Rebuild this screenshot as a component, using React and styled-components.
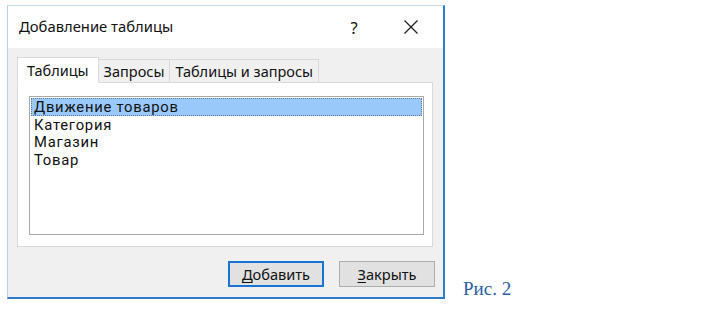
import React from "react";
import styled, { createGlobalStyle } from "styled-components";

const Global = createGlobalStyle`
  html, body { margin: 0; padding: 0; background: #ffffff; }
  body { width: 727px; height: 309px; overflow: hidden; }
`;

const Page = styled.div`
  display: flex;
  align-items: flex-end;
  padding: 5px 0 0 7px;
  gap: 18px;
`;

const Dialog = styled.div`
  width: 435px;
  height: 291px;
  border-top: 1px solid #c9d9ea;
  border-left: 1px solid #b7cfe9;
  border-right: 2px solid #2b7bd3;
  border-bottom: 2px solid #2b7bd3;
  background: #f0f0f0;
  display: flex;
  flex-direction: column;
  font-family: "Noto Sans", "Open Sans", sans-serif;
  color: #111111;
`;

const TitleBar = styled.div`
  height: 42px;
  background: #ffffff;
  display: flex;
  align-items: center;
  padding-left: 11px;
  padding-right: 2px;
  font-size: 14.8px;
`;

const Title = styled.div`
  flex: 1;
  margin-top: -2px;
`;

const TitleButton = styled.div`
  width: ${(p) => p.$w}px;
  display: flex;
  justify-content: center;
  align-items: center;
  font-size: 16.5px;
`;

const Body = styled.div`
  flex: 1;
  display: flex;
  flex-direction: column;
  padding: 8px 10px 0 9px;
`;

const Tabs = styled.div`
  display: flex;
  align-items: flex-end;
  height: 26px;
  position: relative;
  z-index: 1;
`;

const Tab = styled.div`
  height: ${(p) => (p.$active ? "26px" : "23px")};
  padding: 0 ${(p) => (p.$active ? "9px" : "5px")};
  background: ${(p) => (p.$active ? "#ffffff" : "#f0f0f0")};
  border: 1px solid #d9d9d9;
  border-bottom: ${(p) => (p.$active ? "1px solid #ffffff" : "none")};
  margin-right: -1px;
  box-sizing: border-box;
  display: flex;
  align-items: center;
  font-size: 14.5px;
  margin-bottom: ${(p) => (p.$active ? "-1px" : "0")};
`;

const Panel = styled.div`
  height: 165px;
  box-sizing: border-box;
  background: #ffffff;
  border: 1px solid #d9d9d9;
  padding: 13px 8px 0 11px;
`;

const ListBox = styled.div`
  height: 139px;
  box-sizing: border-box;
  border: 1px solid #a9a9a9;
  padding: 1px;
`;

const Item = styled.div`
  height: 17.5px;
  line-height: 18px;
  padding-left: 3px;
  font-family: Roboto, "Noto Sans", sans-serif;
  font-size: 14.8px;
  letter-spacing: 0.75px;
  color: #111111;
  background: ${(p) => (p.$selected ? "#99c9fb" : "transparent")};
  outline: ${(p) => (p.$selected ? "1px dotted #5a7ea8" : "none")};
  outline-offset: -1px;
`;

const Footer = styled.div`
  display: flex;
  justify-content: flex-end;
  gap: 15px;
  margin-right: -2px;
  padding: 14px 0 0 0;
`;

const Button = styled.div`
  width: 96px;
  height: 26px;
  box-sizing: border-box;
  background: #e1e1e1;
  border: ${(p) => (p.$default ? "2px solid #1a73d3" : "1px solid #adadad")};
  display: flex;
  align-items: center;
  justify-content: center;
  font-size: 14.6px;
  color: #111111;
  & u { text-decoration: underline; text-underline-offset: 2px; }
`;

const Caption = styled.div`
  font-family: "Liberation Serif", "Times New Roman", serif;
  font-size: 19px;
  color: #2c5fa6;
  line-height: 20px;
`;

export default function App() {
  const items = ["Движение товаров", "Категория", "Магазин", "Товар"];
  return (
    <>
      <Global />
      <Page>
        <Dialog>
          <TitleBar>
            <Title>Добавление таблицы</Title>
            <TitleButton $w={54}>?</TitleButton>
            <TitleButton $w={60}>
              <svg width="16" height="16" viewBox="0 0 16 16">
                <path d="M1.5 1.5 L14.5 14.5 M14.5 1.5 L1.5 14.5" stroke="#222" strokeWidth="1.3" fill="none" />
              </svg>
            </TitleButton>
          </TitleBar>
          <Body>
            <Tabs>
              <Tab $active>Таблицы</Tab>
              <Tab>Запросы</Tab>
              <Tab>Таблицы и запросы</Tab>
            </Tabs>
            <Panel>
              <ListBox>
                {items.map((t, i) => (
                  <Item key={t} $selected={i === 0}>{t}</Item>
                ))}
              </ListBox>
            </Panel>
            <Footer>
              <Button $default><span><u>Д</u>обавить</span></Button>
              <Button><span><u>З</u>акрыть</span></Button>
            </Footer>
          </Body>
        </Dialog>
        <Caption>Рис. 2</Caption>
      </Page>
    </>
  );
}
